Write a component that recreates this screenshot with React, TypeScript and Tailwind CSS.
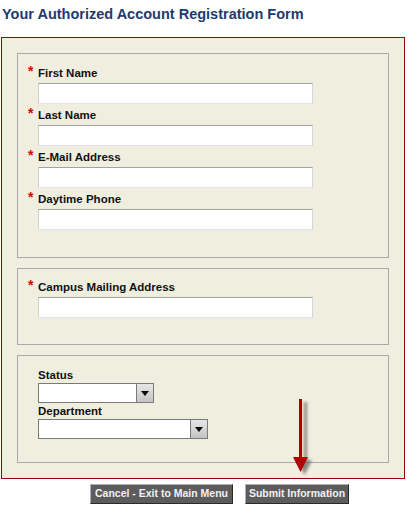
import React from 'react';

const font = { fontFamily: '"Liberation Sans", Arial, sans-serif' };

const TextField: React.FC<{ label: string; first?: boolean }> = ({ label, first }) => (
  <div className={first ? '' : 'mt-[4px]'}>
    <div className="flex items-start">
      <span className="w-[10px] pt-[0px] text-[14px] leading-[10px] font-bold text-[#e00000]">*</span>
      <span className="text-[11.5px] leading-[14px] font-bold text-[#111]">{label}</span>
    </div>
    <div className="ml-[10px] mt-[3px] h-[21px] w-[275px] bg-white border border-t-[#a3a3a3] border-l-[#cfcfcf] border-r-[#d6d6e0] border-b-[#e2e2ea]" />
  </div>
);

const SelectBox: React.FC<{ width: string }> = ({ width }) => (
  <div className={`${width} h-[20px] flex bg-white border border-[#7a7a7a]`}>
    <div className="flex-1" />
    <div className="w-[17px] flex items-center justify-center border-l border-[#7a7a7a] bg-gradient-to-b from-[#e6e6e6] to-[#c4c4c4]">
      <svg width="8" height="5" viewBox="0 0 8 5">
        <path d="M0 0 H8 L4 5 Z" fill="#000" />
      </svg>
    </div>
  </div>
);

const Panel: React.FC<{ className: string; children: React.ReactNode }> = ({ className, children }) => (
  <div className={`border border-[#a9a9a9] pl-[10px] ${className}`}>{children}</div>
);

const App: React.FC = () => {
  return (
    <div className="relative w-[417px] h-[510px] bg-white" style={font}>
      <h1 className="pt-[6px] pl-[2px] text-[14.5px] leading-[17px] font-bold text-[#1e3a70]">
        Your Authorized Account Registration Form
      </h1>

      <div className="ml-px mt-[14px] w-[404px] border border-[#a00000] bg-[#efeedf] p-[15px] flex flex-col gap-[10px]">
        <Panel className="pt-[12px] pb-[27px]">
          <TextField label="First Name" first />
          <TextField label="Last Name" />
          <TextField label="E-Mail Address" />
          <TextField label="Daytime Phone" />
        </Panel>

        <Panel className="pt-[11px] pb-[26px]">
          <TextField label="Campus Mailing Address" first />
        </Panel>

        <Panel className="pt-[12px] pb-[23px] pl-[20px]">
          <div className="text-[11.5px] leading-[14px] font-bold text-[#111]">Status</div>
          <div className="mt-[1px]">
            <SelectBox width="w-[116px]" />
          </div>
          <div className="mt-[1px] text-[11.5px] leading-[14px] font-bold text-[#111]">Department</div>
          <div className="mt-[1px]">
            <SelectBox width="w-[170px]" />
          </div>
        </Panel>
      </div>

      <div className="mt-[5px] pl-[90px] flex gap-[12px]">
        <button className="w-[143px] h-[20px] bg-[#5c5c5c] text-[#f2f2f2] text-[10.5px] font-bold border border-t-[#b0b0b0] border-l-[#b0b0b0] border-r-[#2a2a2a] border-b-[#2a2a2a]">
          Cancel - Exit to Main Menu
        </button>
        <button className="w-[104px] h-[20px] bg-[#5c5c5c] text-[#f2f2f2] text-[10.5px] font-bold border border-t-[#b0b0b0] border-l-[#b0b0b0] border-r-[#2a2a2a] border-b-[#2a2a2a]">
          Submit Information
        </button>
      </div>

      <svg className="absolute left-[285px] top-[392px]" width="32" height="88" viewBox="0 0 32 88">
        <defs>
          <filter id="blur" x="-50%" y="-20%" width="200%" height="140%">
            <feGaussianBlur stdDeviation="1.8" />
          </filter>
        </defs>
        <g filter="url(#blur)" fill="#6e6e66" opacity="0.8">
          <rect x="19" y="10" width="3" height="62" />
          <path d="M12 68 H27 L19.5 83 Z" />
        </g>
        <rect x="14" y="7" width="3" height="61" fill="#b00000" />
        <path d="M8 65 H23 L15.5 80 Z" fill="#b00000" />
      </svg>
    </div>
  );
};

export default App;
